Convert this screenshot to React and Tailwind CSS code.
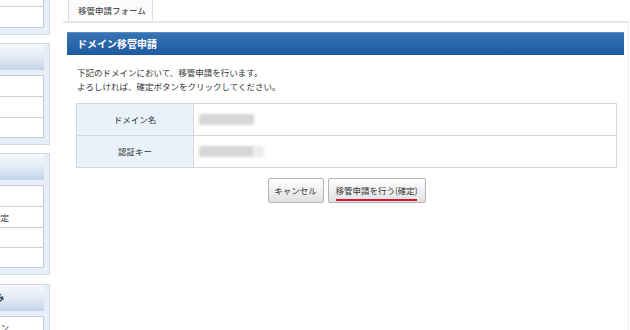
import React from "react";

const font = "font-['Noto_Sans_CJK_JP','Noto_Sans',sans-serif]";

function SideBox({ header, rows, className = "" }) {
  return (
    <div className={"border border-[#d3d9e2] bg-[#e6eef9] pr-[5px] pb-[6px] " + className}>
      {header !== undefined && (
        <div className="h-[26px] bg-gradient-to-b from-[#f7f9fc] via-[#e3ebf6] to-[#c3d3ea] flex items-center justify-end pr-[40px] text-[9px] font-bold text-[#333]">
          {header}
        </div>
      )}
      <div className={"bg-white border border-[#c9cdd3] " + (header !== undefined ? "mt-[5px]" : "")}>
        {rows.map((r, i) => (
          <div
            key={i}
            className={
              "flex items-center justify-end pr-[34px] text-[8.5px] text-[#333] " +
              (i < rows.length - 1 ? "border-b border-[#d0d0d0] " : "") +
              r.h
            }
          >
            {r.t}
          </div>
        ))}
      </div>
    </div>
  );
}

export default function App() {
  return (
    <div className={"flex w-[630px] h-[330px] bg-white overflow-hidden " + font}>
      {/* Sidebar */}
      <div className="w-[50px] shrink-0 overflow-hidden">
        <div className="w-[200px] ml-[-150px] mt-[-16px] flex flex-col">
          <SideBox
            rows={[
              { t: "", h: "h-[21px]" },
              { t: "", h: "h-[20px]" },
            ]}
          />
          <SideBox
            className="mt-[8px]"
            header=""
            rows={[
              { t: "", h: "h-[21px]" },
              { t: "", h: "h-[21px]" },
              { t: "", h: "h-[19px]" },
            ]}
          />
          <SideBox
            className="mt-[8px]"
            header=""
            rows={[
              { t: "", h: "h-[21px]" },
              { t: "ネームサーバー設定", h: "h-[21px]" },
              { t: "", h: "h-[20px]" },
              { t: "", h: "h-[19px]" },
            ]}
          />
          <SideBox
            className="mt-[9px]"
            header="お申し込み"
            rows={[
              { t: "ドメイン", h: "h-[21px]" },
              { t: "", h: "h-[21px]" },
            ]}
          />
        </div>
      </div>

      {/* Main */}
      <div className="ml-[13px] w-[566px] shrink-0 flex flex-col text-[#333]">
        {/* Tab row */}
        <div className="h-[21px] flex">
          <div className="ml-[5px] w-[85px] h-[21px] border-x border-[#dcdcdc] bg-[#fbfbfb] flex items-center pl-[9px] text-[8.5px] leading-none text-[#333]">
            移管申請フォーム
          </div>
        </div>
        <div className="h-[2px] bg-[#e8e5de]" />
        <div className="flex-1 border-r border-[#f0f0f0] flex flex-col">
          {/* Title bar */}
          <div className="mt-[9px] ml-[4px] mr-[4px] h-[23px] bg-gradient-to-b from-[#3774b5] to-[#1d5a9e] border-t border-[#5a8cc4] flex items-center pl-[10px] text-white text-[10px] font-bold leading-none">
            ドメイン移管申請
          </div>
          {/* Description */}
          <div className="mt-[10px] ml-[14px] text-[8.5px] leading-[14px] text-[#333]">
            <p>下記のドメインにおいて、移管申請を行います。</p>
            <p>よろしければ、確定ボタンをクリックしてください。</p>
          </div>
          {/* Table */}
          <div className="mt-[10px] ml-[13px] mr-[11px] border border-[#d4d7dc]">
            <div className="flex h-[32px] border-b border-[#d4d7dc]">
              <div className="w-[117px] shrink-0 bg-[#e9f1fa] border-r border-[#d4d7dc] flex items-center justify-center text-[8.5px]">
                ドメイン名
              </div>
              <div className="flex-1 flex items-center pl-[5px]">
                <div className="w-[55px] h-[11px] bg-[#d6d6d6] blur-[1.5px]" />
              </div>
            </div>
            <div className="flex h-[31px]">
              <div className="w-[117px] shrink-0 bg-[#e9f1fa] border-r border-[#d4d7dc] flex items-center justify-center text-[8.5px]">
                認証キー
              </div>
              <div className="flex-1 flex items-center pl-[5px]">
                <div className="w-[55px] h-[11px] bg-[#d6d6d6] blur-[1.5px]" />
                <div className="w-[10px] h-[11px] bg-[#ececec] blur-[1.5px]" />
              </div>
            </div>
          </div>
          {/* Buttons */}
          <div className="mt-[10px] flex justify-center gap-[4px] pl-[2px]">
            <button className="w-[56px] h-[25px] border border-[#b4b4b4] rounded-[2px] bg-gradient-to-b from-[#ffffff] to-[#e1e1e1] text-[8.5px] text-[#333] flex items-center justify-center">
              キャンセル
            </button>
            <button className="relative w-[98px] h-[25px] border border-[#b4b4b4] rounded-[2px] bg-gradient-to-b from-[#ffffff] to-[#e1e1e1] text-[8.5px] text-[#333] flex items-center justify-center">
              移管申請を行う(確定)
              <span className="absolute left-[7px] right-[8px] bottom-[1px] h-[2px] bg-[#d8142e]" />
            </button>
          </div>
        </div>
      </div>
    </div>
  );
}
